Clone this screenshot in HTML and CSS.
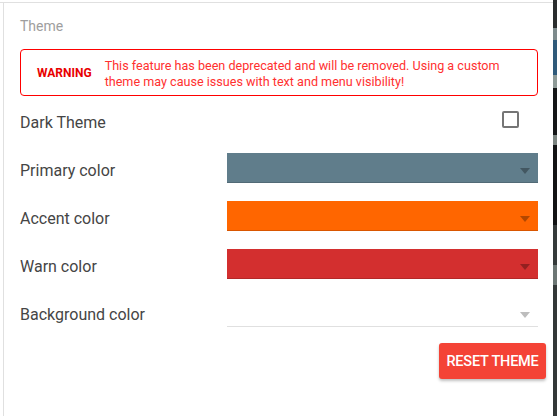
FILE: index.html
```html
<!DOCTYPE html>
<html lang="en">
<head>
<meta charset="utf-8">
<title>Theme settings</title>
<link rel="stylesheet" href="styles.css">
</head>
<body>
<div class="window">
  <div class="panel">
    <div class="content">
      <div class="section-title">Theme</div>
      <div class="warning">
        <div class="warning-label">WARNING</div>
        <div class="warning-text">This feature has been deprecated and will be removed. Using a custom theme may cause issues with text and menu visibility!</div>
      </div>
      <div class="rows">
        <div class="row">
          <div class="label">Dark Theme</div>
          <div class="control control-end"><span class="checkbox"></span></div>
        </div>
        <div class="row">
          <div class="label">Primary color</div>
          <div class="control"><div class="select select-primary"><span class="arrow"></span></div></div>
        </div>
        <div class="row">
          <div class="label">Accent color</div>
          <div class="control"><div class="select select-accent"><span class="arrow"></span></div></div>
        </div>
        <div class="row">
          <div class="label">Warn color</div>
          <div class="control"><div class="select select-warn"><span class="arrow"></span></div></div>
        </div>
        <div class="row">
          <div class="label">Background color</div>
          <div class="control"><div class="select select-bg"><span class="arrow arrow-light"></span></div></div>
        </div>
      </div>
      <div class="actions">
        <button class="reset-btn" type="button">RESET THEME</button>
      </div>
    </div>
  </div>
  <div class="backdrop"></div>
</div>
</body>
</html>
```
FILE: styles.css
```css
html, body {
  margin: 0;
  padding: 0;
  height: 100%;
}

body {
  font-family: Roboto, "Liberation Sans", Arial, sans-serif;
  background: #ffffff;
  overflow: hidden;
}

.window {
  display: flex;
  height: 416px;
}

.panel {
  width: 553px;
  flex: 0 0 553px;
  background: #ffffff;
  padding-top: 2px;
  box-sizing: border-box;
}

.backdrop {
  flex: 1 1 auto;
  background: linear-gradient(to bottom,
    #2a2d2e 0px, #2a2d2e 28px,
    #7d8a8c 28px, #7d8a8c 40px,
    #2f5a7a 40px, #2f5a7a 75px,
    #8e9a97 75px, #8e9a97 88px,
    #151618 88px, #151618 135px,
    #7b8480 135px, #7b8480 145px,
    #121314 145px, #121314 225px,
    #353a3a 225px, #353a3a 265px,
    #6c7674 265px, #6c7674 285px,
    #333838 285px, #333838 416px);
}

.content {
  height: 414px;
  box-sizing: border-box;
  border-top: 1px solid #e0e0e0;
  padding: 13px 15px 0 20px;
  background: linear-gradient(#e0e0e0, #e0e0e0) 3px 0 / 1px 100% no-repeat;
}

.section-title {
  font-size: 14px;
  line-height: 20px;
  color: #9e9e9e;
}

.warning {
  margin-top: 13px;
  height: 47px;
  box-sizing: border-box;
  border: 1px solid #ff0000;
  border-radius: 4px;
  display: flex;
  align-items: center;
  padding: 0 30px 0 16px;
  gap: 13px;
}

.warning-label {
  font-size: 12px;
  font-weight: 700;
  color: #e80000;
  flex: 0 0 auto;
  padding-top: 1px;
}

.warning-text {
  font-size: 12.6px;
  line-height: 16px;
  color: #ff3030;
  padding-top: 3px;
}

.rows {
  margin-top: 2px;
}

.row {
  display: grid;
  grid-template-columns: 207px 1fr;
  height: 48px;
}

.label {
  font-size: 16px;
  line-height: 48px;
  padding-top: 1px;
  color: #454545;
}

.control {
  position: relative;
}

.control-end {
  display: flex;
  justify-content: flex-end;
  align-items: flex-start;
  padding-right: 19px;
}

.checkbox {
  display: block;
  width: 17px;
  height: 17px;
  box-sizing: border-box;
  border: 2px solid #757575;
  border-radius: 2px;
  margin-top: 13px;
}

.select {
  margin-top: 7px;
  height: 30px;
  box-sizing: border-box;
  border-bottom: 1px solid rgba(0, 0, 0, 0.15);
  position: relative;
}

.select-primary { background: #607d8b; }
.select-accent { background: #ff6600; }
.select-warn { background: #d32f2f; }
.select-bg {
  background: #ffffff;
  border-bottom-color: #e0e0e0;
}

.arrow {
  position: absolute;
  right: 8px;
  top: 15px;
  width: 0;
  height: 0;
  border-left: 5.5px solid transparent;
  border-right: 5.5px solid transparent;
  border-top: 6px solid rgba(0, 0, 0, 0.3);
}

.arrow-light {
  border-top-color: #bdbdbd;
}

.actions {
  display: flex;
  justify-content: flex-end;
  margin-top: 5px;
  margin-right: -8px;
}

.reset-btn {
  font-family: Roboto, "Liberation Sans", Arial, sans-serif;
  font-size: 14.5px;
  font-weight: 500;
  color: #ffffff;
  background: #f44336;
  border: none;
  border-radius: 3px;
  width: 107px;
  height: 36px;
  padding: 0;
  box-shadow: 0 2px 3px rgba(0, 0, 0, 0.25);
  letter-spacing: -0.2px;
}
```
